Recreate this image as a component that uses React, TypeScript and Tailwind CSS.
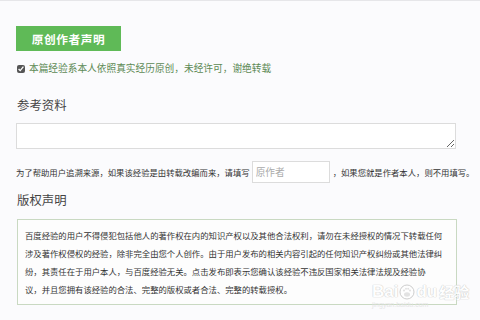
import React from 'react';

const FONT = '"Noto Sans CJK SC", "Noto Sans", sans-serif';

export default function App() {
  return (
    <div
      className="relative h-[320px] w-[480px] overflow-hidden border-t border-[#e6e6e9] bg-[#fbfbfd] text-[#333]"
      style={{ fontFamily: FONT }}
    >
      <div className="flex flex-col pl-[16px] pt-[25px]">
        <div className="flex h-[25px] w-[105px] items-center justify-center bg-[#5fba57] text-[11.7px] font-semibold tracking-[0.6px] text-white">
          原创作者声明
        </div>

        <label className="mt-[13px] flex items-center gap-[4px] pl-[1px] text-[9.7px] leading-none text-[#5d8a55]">
          <input type="checkbox" defaultChecked className="m-0 h-[8px] w-[8px] accent-[#555]" />
          <span>本篇经验系本人依照真实经历原创，未经许可，谢绝转载</span>
        </label>

        <h2 className="mt-[25px] pl-[1px] text-[12.4px] leading-none text-[#444]">参考资料</h2>

        <textarea className="mt-[12px] h-[26px] w-[440px] resize-y border border-[#dcdcdc] bg-white" />

        <div className="mt-[12px] flex items-center text-[8.35px] leading-none text-[#333]">
          <span>为了帮助用户追溯来源，如果该经验是由转载改编而来，请填写</span>
          <input
            placeholder="原作者"
            className="ml-[2px] h-[22px] w-[78px] border border-[#dcdcdc] bg-white px-[3px] text-[9.7px] placeholder:text-[#aaa]"
          />
          <span className="ml-[3px]">，如果您就是作者本人，则不用填写。</span>
        </div>

        <h2 className="mt-[11px] pl-[1px] text-[12.4px] leading-none text-[#444]">版权声明</h2>

        <div className="mt-[12px] ml-[1px] h-[86px] w-[440px] border border-[#c9d9c2] bg-[#fdfdfd] px-[7px] pt-[6px] text-[8.35px] leading-[18px] text-[#333]">
          <p className="whitespace-nowrap">百度经验的用户不得侵犯包括他人的著作权在内的知识产权以及其他合法权利，请勿在未经授权的情况下转载任何</p>
          <p className="whitespace-nowrap">涉及著作权侵权的经验，除非完全由您个人创作。由于用户发布的相关内容引起的任何知识产权纠纷或其他法律纠</p>
          <p className="whitespace-nowrap">纷，其责任在于用户本人，与百度经验无关。点击发布即表示您确认该经验不违反国家相关法律法规及经验协</p>
          <p className="whitespace-nowrap">议，并且您拥有该经验的合法、完整的版权或者合法、完整的转载授权。</p>
        </div>
      </div>

      <div className="pointer-events-none absolute left-[372px] top-[282px] flex flex-col items-start opacity-90">
        <div
          className="flex items-center text-[17px] font-bold leading-none text-white"
          style={{ fontFamily: '"Liberation Sans", sans-serif', textShadow: '0 0 1px #c4c4c4, 0 0 1px #c4c4c4' }}
        >
          <span>Bai</span>
          <svg width="16" height="16" viewBox="0 0 16 16" className="mx-[1px]">
            <circle cx="8" cy="8" r="7" fill="#fff" stroke="#c8c8c8" strokeWidth="1" />
            <ellipse cx="8" cy="10.5" rx="3" ry="2.2" fill="#e0e0e0" />
            <circle cx="5" cy="6.5" r="1.1" fill="#e0e0e0" />
            <circle cx="11" cy="6.5" r="1.1" fill="#e0e0e0" />
            <circle cx="7" cy="4.8" r="1" fill="#e0e0e0" />
            <circle cx="9.2" cy="4.8" r="1" fill="#e0e0e0" />
          </svg>
          <span>du</span>
          <span className="ml-[2px] text-[15px]" style={{ fontFamily: FONT }}>经验</span>
        </div>
        <div className="mt-[1px] text-[7px] leading-none text-[#e4e4e4]" style={{ fontFamily: '"Liberation Sans", sans-serif' }}>
          jingyan.baidu.com
        </div>
      </div>
    </div>
  );
}
